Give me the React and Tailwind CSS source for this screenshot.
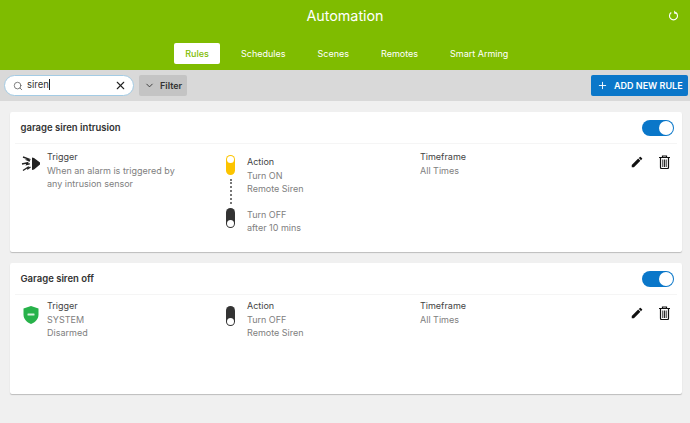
import { ChevronDown, Plus, Search, X } from "lucide-react";

function Switch({ on, className = "" }) {
    return (
        <div className={`relative h-[20px] w-[9px] shrink-0 rounded-full ${on ? "bg-[#fcc400]" : "bg-[#333]"} ${className}`}>
            <div className={`absolute left-[1px] h-[7px] w-[7px] rounded-full bg-white ${on ? "top-[1px]" : "bottom-[1px]"}`} />
        </div>
    );
}

function Toggle() {
    return (
        <div className="flex h-[16px] w-[32px] items-center justify-end rounded-full bg-[#0a77c9] pr-[1px]">
            <div className="h-[14px] w-[14px] rounded-full bg-white" />
        </div>
    );
}

function SirenIcon() {
    return (
        <svg width="20" height="18" viewBox="0 0 20 18" className="shrink-0">
            <path d="M11 2.500l2 .5 6 4.500v2l-6 5-2 .5z" fill="#222" />
            <path d="M2 2l6 2.200-2 .6 3 1.200M1 9l5.500-1.200-.8 1.700 3-.7M2 15.500l5-3.300 0 1.500 2.500-1.700" stroke="#222" strokeWidth="1.400" fill="none" />
        </svg>
    );
}

function ShieldIcon() {
    return (
        <svg width="18" height="20" viewBox="0 0 18 20" className="shrink-0">
            <path d="M9 1l7.500 2.500v6c0 4.500-3.200 7.700-7.500 9.500-4.300-1.800-7.500-5-7.500-9.500v-6z" fill="#27b24a" />
            <rect x="5.500" y="8.500" width="7" height="2" rx="0.500" fill="#d5f2dc" />
        </svg>
    );
}

function PencilIcon() {
    return (
        <svg width="14" height="14" viewBox="0 0 24 24" fill="#111">
            <path d="M3 17.250V21h3.750L17.810 9.940l-3.750-3.750L3 17.250zM20.710 7.040a1 1 0 0 0 0-1.410l-2.340-2.340a1 1 0 0 0-1.410 0l-1.830 1.830 3.750 3.750 1.830-1.830z" />
        </svg>
    );
}

function TrashIcon() {
    return (
        <svg width="11" height="14" viewBox="0 0 11 14" fill="none" stroke="#111">
            <path d="M0 2.500h11M3.500 2.500V1h4v1.500" strokeWidth="1.200" />
            <path d="M1.500 3v9.500a1 1 0 0 0 1 1h6a1 1 0 0 0 1-1V3" strokeWidth="1.200" />
            <path d="M3.800 4.500v7.500M5.500 4.500v7.500M7.200 4.500v7.500" strokeWidth="0.900" />
        </svg>
    );
}

function RefreshIcon() {
    return (
        <svg width="11" height="11" viewBox="0 0 11 11" fill="none" className="absolute right-[11px] top-[10px]">
            <path d="M3.300 2.500a4 4 0 1 0 4.400 0" stroke="#fff" strokeWidth="1.100" />
            <path d="M6.200.5v3.200h3z" fill="#fff" />
        </svg>
    );
}

function Label({ children }) {
    return <p className="text-[9px] leading-[13.500px] text-[#444]">{children}</p>;
}

function Sub({ children }) {
    return <p className="text-[9px] leading-[13.500px] text-[#808080]">{children}</p>;
}

function RuleCard({ title, icon, trigger, action, textClass = "", className = "" }) {
    return (
        <div className={`rounded-[2px] bg-white shadow-[0_1px_1px_rgba(0,0,0,0.22)] ${className}`}>
            <div className="mx-[5px] flex h-[32px] items-center justify-between border-b border-[#f5f5f5] pl-[5.500px] pr-[3px]">
                <p className="pt-[1px] text-[9.500px] font-semibold text-[#333]">{title}</p>
                <Toggle />
            </div>
            <div className="flex pl-[11px] pt-[6px]">
                <div className="flex w-[205px] gap-[6px]">
                    <div className="flex h-[27px] w-[20px] shrink-0 items-center justify-center">{icon}</div>
                    <div className={textClass}>
                        <Label>Trigger</Label>
                        {trigger.map((line) => <Sub key={line}>{line}</Sub>)}
                    </div>
                </div>
                <div className="w-[194px]">{action}</div>
                <div className={`w-[210px] ${textClass}`}>
                    <Label>Timeframe</Label>
                    <Sub>All Times</Sub>
                </div>
                <div className="flex items-center gap-[15px] self-start pt-[5px]">
                    <PencilIcon />
                    <TrashIcon />
                </div>
            </div>
        </div>
    );
}

export default function App() {
    return (
        <div className="h-[423px] w-[690px] overflow-hidden bg-[#f0f0f0] font-['Inter',sans-serif]">
            <div className="relative h-[70px] bg-[#7fbc00] text-white">
                <p className="pt-[7px] text-center text-[14.300px] leading-[18px]">Automation</p>
                <RefreshIcon />
                <div className="absolute left-[174px] top-[43px] flex items-center text-[9px]">
                    <div className="flex h-[21px] w-[46px] items-center justify-center rounded-[2px] bg-white font-medium text-[#7fbc00]">Rules</div>
                    <span className="ml-[21px]">Schedules</span>
                    <span className="ml-[32px]">Scenes</span>
                    <span className="ml-[32px]">Remotes</span>
                    <span className="ml-[32px]">Smart Arming</span>
                </div>
            </div>

            <div className="flex h-[31px] items-center justify-between bg-[#d9d9d9] pl-[4px] pr-[2px]">
                <div className="flex items-center gap-[5px]">
                    <div className="flex h-[21px] w-[130px] items-center rounded-full border border-[#a3cbe4] bg-white pl-[8px] pr-[6px]">
                        <Search size={10} color="#666" />
                        <span className="ml-[4px] flex-1 text-[9.500px] text-[#333]">siren<span className="border-r border-[#222]" /></span>
                        <X size={13} color="#222" />
                    </div>
                    <div className="flex h-[21px] w-[48px] items-center gap-[5px] rounded-[2px] bg-[#c4c4c4] pl-[5px] text-[9px] font-semibold text-[#333]">
                        <ChevronDown size={11} />
                        Filter
                    </div>
                </div>
                <div className="flex h-[21px] w-[97px] items-center gap-[6px] rounded-[2px] bg-[#0a77c9] pl-[6px] text-[9px] font-semibold text-white">
                    <Plus size={11} />
                    ADD NEW RULE
                </div>
            </div>

            <div className="pl-[10px] pt-[11px]">
                <RuleCard
                    className="h-[140px] w-[672px]"
                    title="garage siren intrusion"
                    icon={<SirenIcon />}
                    trigger={["When an alarm is triggered by", "any intrusion sensor"]}
                    action={
                        <div className="flex gap-[12px] pt-[5px]">
                            <div className="flex w-[9px] flex-col items-center">
                                <Switch on />
                                <div className="my-[4px] h-[25px] border-l-2 border-dotted border-[#777]" />
                                <Switch />
                            </div>
                            <div>
                                <Label>Action</Label>
                                <Sub>Turn ON</Sub>
                                <Sub>Remote Siren</Sub>
                                <div className="mt-[12px]">
                                    <Sub>Turn OFF</Sub>
                                    <Sub>after 10 mins</Sub>
                                </div>
                            </div>
                        </div>
                    }
                />
                <RuleCard
                    className="mt-[11px] h-[131px] w-[672px]"
                    title="Garage siren off"
                    icon={<ShieldIcon />}
                    textClass="-mt-[2px]"
                    trigger={["SYSTEM", "Disarmed"]}
                    action={
                        <div className="flex gap-[12px]">
                            <Switch className="mt-[5px]" />
                            <div className="-mt-[2px]">
                                <Label>Action</Label>
                                <Sub>Turn OFF</Sub>
                                <Sub>Remote Siren</Sub>
                            </div>
                        </div>
                    }
                />
            </div>
        </div>
    );
}
